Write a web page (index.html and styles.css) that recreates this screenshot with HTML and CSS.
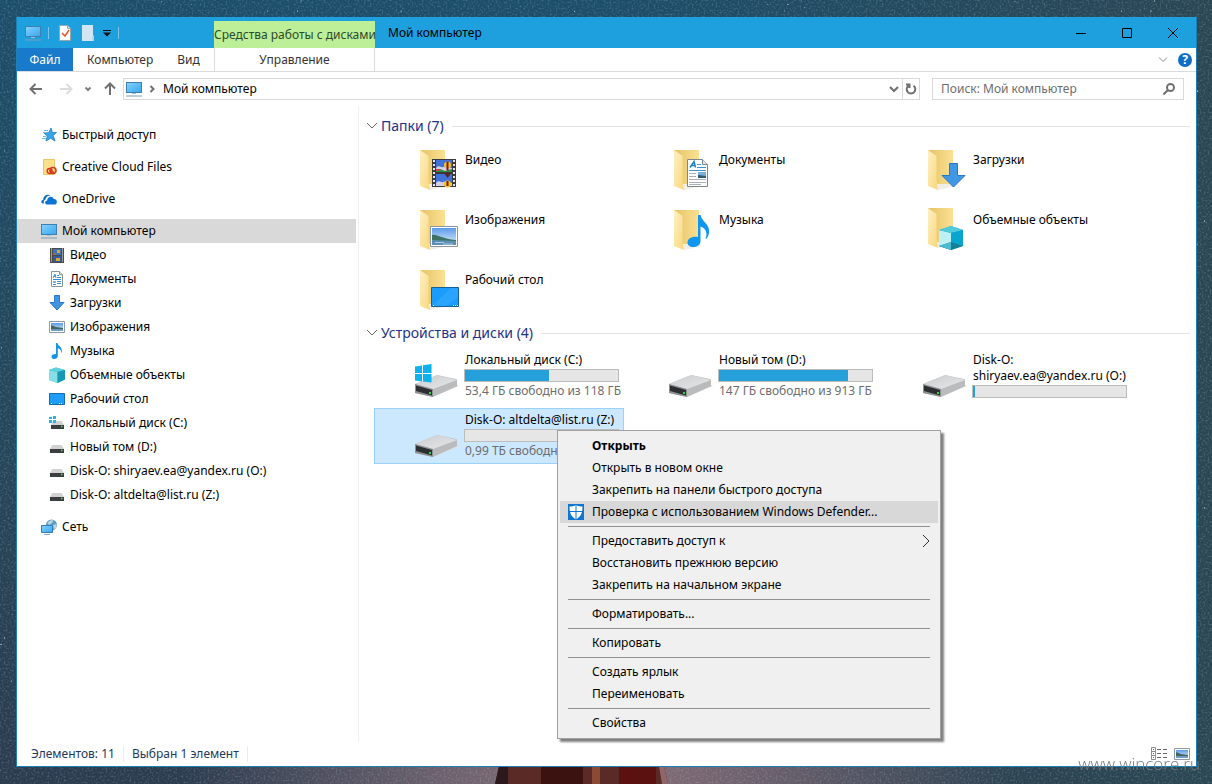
FILE: index.html
```html
<!DOCTYPE html>
<html lang="ru">
<head>
	<meta charset="utf-8">
	<title>Мой компьютер</title>
	<link rel="stylesheet" href="styles.css">
</head>

<body>
	<svg class="wallpaper" viewBox="0 0 1212 784" preserveAspectRatio="none" aria-hidden="true">
		<defs>
			<linearGradient id="sky" x1="0" y1="0" x2="0" y2="1">
				<stop offset="0" stop-color="#1c4d69"/>
				<stop offset=".5" stop-color="#24475b"/>
				<stop offset="1" stop-color="#2c3b4e"/>
			</linearGradient>
			<linearGradient id="skyRight" x1="0" y1="0" x2="1" y2="0">
				<stop offset=".5" stop-color="#2b4653" stop-opacity="0"/>
				<stop offset="1" stop-color="#2b4653"/>
			</linearGradient>
			<radialGradient id="dusk" cx="600" cy="800" r="420" gradientUnits="userSpaceOnUse">
				<stop offset="0" stop-color="#8c7078"/>
				<stop offset=".4" stop-color="#6b5f6b"/>
				<stop offset="1" stop-color="#6b5f6b" stop-opacity="0"/>
			</radialGradient>
			<filter id="grain" x="0" y="0" width="100%" height="100%">
				<feTurbulence type="fractalNoise" baseFrequency=".5" numOctaves="2" seed="4"/>
				<feColorMatrix values="0 0 0 0 .45  0 0 0 0 .7  0 0 0 0 .85  2.4 0 0 0 -1.1"/>
			</filter>
			<filter id="stars" x="0" y="0" width="100%" height="100%">
				<feTurbulence type="fractalNoise" baseFrequency=".3" numOctaves="1" seed="9"/>
				<feColorMatrix values="0 0 0 0 .8  0 0 0 0 .92  0 0 0 0 1  9 0 0 0 -6.8"/>
			</filter>
		</defs>
		<rect width="1212" height="784" fill="url(#sky)"/>
		<rect width="1212" height="784" fill="url(#skyRight)"/>
		<rect width="1212" height="784" fill="url(#dusk)"/>
		<rect width="1212" height="784" filter="url(#grain)" opacity=".25"/>
		<rect width="1212" height="740" filter="url(#stars)"/>
		<path d="M499 766h165l4 18H495z" fill="#5a2a27"/>
		<path d="M499 766h9v18h-13z" fill="#2c191d"/>
		<path d="M541 766h42v18h-42z" fill="#3c1210"/>
		<path d="M592 766h8v18h-8z" fill="#8a4a36"/>
		<path d="M619 766h37v18h-37z" fill="#5a110f"/>
		<path d="M659 766h5l4 18h-6z" fill="#8f6768"/>
	</svg>

	<svg class="defs" aria-hidden="true">
		<defs>
			<linearGradient id="gScreen" x1="0" y1="0" x2="1" y2="1">
				<stop offset="0" stop-color="#8bd3fb"/>
				<stop offset=".5" stop-color="#5dbcf7"/>
				<stop offset="1" stop-color="#3ba6ee"/>
			</linearGradient>
			<linearGradient id="gBack" x1="0" y1="0" x2="1" y2="0">
				<stop offset="0" stop-color="#e6c266"/>
				<stop offset="1" stop-color="#fbe193"/>
			</linearGradient>
			<linearGradient id="gFlap" x1="0" y1="0" x2="1" y2="1">
				<stop offset="0" stop-color="#fff0c4"/>
				<stop offset="1" stop-color="#f8d77a"/>
			</linearGradient>
			<linearGradient id="gDrive" x1="0" y1="0" x2="1" y2="1">
				<stop offset="0" stop-color="#c9cbcd"/>
				<stop offset="1" stop-color="#e8e9ea"/>
			</linearGradient>
			<linearGradient id="gSky" x1="0" y1="0" x2="0" y2="1">
				<stop offset="0" stop-color="#5b9be8"/>
				<stop offset="1" stop-color="#e4f1fb"/>
			</linearGradient>
		</defs>

		<symbol id="pc" viewBox="0 0 16 16">
			<rect x=".5" y="1.5" width="15" height="10" fill="url(#gScreen)" stroke="#3f7fae"/>
			<path d="M6 12.5h4" stroke="#9cc3dc"/>
			<path d="M0 15h16" stroke="#7d9db3"/>
		</symbol>
		<symbol id="star" viewBox="0 0 16 16">
			<path d="M10 1l1.300 4.500h4.200l-3.300 3 1.800 5.500-4.500-2.800L5 14l1.300-5L3 6l4.700-.3z" fill="#37a5ee" stroke="#1c7fc4" stroke-width=".8"/>
			<path d="M3 3.500h4M2 5.500h2M2 9.500h3M1 11.500h4" stroke="#6fbdec"/>
		</symbol>
		<symbol id="ccloud" viewBox="0 0 16 16">
			<path d="M2.500.5h11v15h-11z" fill="#fbe08c" stroke="#e8c768"/>
			<g fill="none" stroke="#d8391f" stroke-width="1.500">
				<circle cx="8.600" cy="12" r="2.400"/>
				<circle cx="12" cy="11.500" r="3"/>
				<path d="M8.500 11.500l4.500 2"/>
			</g>
		</symbol>
		<symbol id="onedrive" viewBox="0 0 16 16">
			<path d="M1.800 12.500C-.5 12 0 8.700 2.300 8.700 2 5 6.500 2.200 9.700 4.600 6.500 4.500 4.500 6.300 4.500 8.500c-2 .8-2.300 2.800-1.200 4z" fill="#0f6cbd"/>
			<path d="M6 13.500c-2.800-.4-2.300-4 .2-4.100C6.300 5.500 11.500 4.500 12.800 8c3.500-.3 4.200 4.700 1.200 5.500z" fill="#0a74d1"/>
		</symbol>
		<symbol id="video" viewBox="0 0 16 16">
			<path d="M1 1h14v15H1z" fill="#4a4a4a"/>
			<path d="M4 2h8v6H4z" fill="#4271b5"/>
			<path d="M4 9h8v6H4z" fill="#35599c"/>
			<path d="M8 3h3v3H8zM7 11h4v3H7z" fill="#d9a827"/>
			<path d="M4 6h3v2H4z" fill="#87754f"/>
			<path d="M2.500 1.500v14M13.500 1.500v14" stroke="#eee" stroke-dasharray="1 1"/>
		</symbol>
		<symbol id="doc" viewBox="0 0 16 16">
			<path d="M2.500.5h8l3 3v12h-11z" fill="#fff" stroke="#8a949c"/>
			<path d="M10.500.5v3h3" fill="#eee" stroke="#8a949c"/>
			<path d="M4 7l2-4 1 4M4.500 5.500h2M8 4.500h2M8 6.500h4M4 8.500h8M8 10.500h4M8 12.500h4M4 13.500h3" fill="none" stroke="#3a8fd0"/>
			<path d="M4 10h3v2H4z" fill="#8eabc1"/>
		</symbol>
		<symbol id="down" viewBox="0 0 16 16">
			<path d="M5.500.5h5v7h4.500L8 15 1 7.500h4.500z" fill="#3f95e4" stroke="#2a78c8"/>
		</symbol>
		<symbol id="pic" viewBox="0 0 16 16">
			<path d="M.5 2.500h15v11H.5z" fill="#fff" stroke="#8e9aa5"/>
			<path d="M2 4h12v8H2z" fill="url(#gSky)"/>
			<path d="M2 6l5 2 7 1v1H2z" fill="#40675f"/>
			<path d="M2 10h12v2H2z" fill="#6e9bbf"/>
		</symbol>
		<symbol id="music" viewBox="0 0 16 16">
			<path d="M7 0h1.500c.3 3 5 4 4.300 8.500-.3 1.300-.8 1.500-.8 1.500.5-3-1.500-4.200-3.200-4.700V13c0 1.700-1.800 3-3.700 3S2.500 15 2.500 13.500 4 11 7 11z" fill="#1593e6"/>
		</symbol>
		<symbol id="cube" viewBox="0 0 16 16">
			<path d="M0 3l7-2.500L16 3v9.500L8.500 16 0 13z" fill="#34bcd0"/>
			<path d="M0 3l8.500 2V16L0 13z" fill="#86dfe6"/>
			<path d="M0 3l7-2.500L16 3 8.500 5z" fill="#5fd0dc"/>
			<path d="M8.500 5L16 3v9.500L8.500 16z" fill="#1799b4"/>
		</symbol>
		<symbol id="desktop" viewBox="0 0 16 16">
			<path d="M.5 2.500h15v11H.5z" fill="#1f9dfb" stroke="#146cae"/>
			<path d="M2 12.500h1M10 12.500h4" stroke="#fff" stroke-dasharray="1 1"/>
		</symbol>
		<symbol id="hdd" viewBox="0 0 16 16">
			<path d="M3.500 6h9l2.500 4H1z" fill="#cfd1d3"/>
			<path d="M1 10h14v4H1z" fill="#3b3e3f"/>
			<path d="M12 11.500h1.500" stroke="#46e05a" stroke-width="1.500"/>
		</symbol>
		<symbol id="hddwin" viewBox="0 0 16 16">
			<path d="M4 6h8.500l2.500 4H2z" fill="#cfd1d3"/>
			<path d="M2 10h13v4H2z" fill="#3b3e3f"/>
			<path d="M12 11.500h1.500" stroke="#46e05a" stroke-width="1.500"/>
			<path d="M0 2h3v2H0zM4 1h3v3H4zM0 5h3v3H0zM4 5h3v3H4z" fill="#28b3ec"/>
		</symbol>
		<symbol id="net" viewBox="0 0 16 16">
			<circle cx="10.500" cy="6" r="5.500" fill="#5d9cc4"/>
			<path d="M6.500 4c2-3 4-3 6-2.500L11 4 8 6zM12 6l3.500-1c.5 3-1 5-2.500 5.500z" fill="#b6d7e6"/>
			<path d="M.5 6.500h11v7H.5z" fill="url(#gScreen)" stroke="#2f7db5"/>
			<path d="M3 15.500h6" stroke="#7bb2d4"/>
		</symbol>

		<symbol id="folder" viewBox="0 0 48 50">
			<path d="M15 36h17l3 2-18 4z" fill="#f1eee6"/>
			<path d="M7 2h25v34H12z" fill="url(#gBack)"/>
			<path d="M7 2l8.500 6v25L17 42 7 38z" fill="url(#gFlap)"/>
		</symbol>
		<symbol id="drive" viewBox="0 0 48 50">
			<path d="M22 48l24-10-2-1-24 10z" fill="#ddd"/>
			<path d="M2 36l21-8.500q1-.5 2-.3L43 31q1 .5 1 1v6l-24 11L2 45z" fill="#b9bbbd"/>
			<path d="M2 36l21-8.500q1-.5 2-.3L44 32 20 41z" fill="url(#gDrive)"/>
			<path d="M2 36l18 5v8L2 45z" fill="#8e9193"/>
			<path d="M3 37.500l16 4.500v5.500L3 43z" fill="#2b2f30"/>
			<path d="M16 44h2v2h-2z" fill="#35d04e"/>
		</symbol>
	</svg>

	<div class="window">
		<header class="titlebar">
			<div class="quick">
				<svg class="ico" aria-hidden="true"><use href="#pc"/></svg>
				<span class="divider"></span>
				<button type="button" aria-label="Свойства">
					<svg class="ico" viewBox="0 0 16 16"><path d="M2.500.5h8l3 3v12h-11z" fill="#fff" stroke="#9aa5ac"/><path d="M10.500.5v3h3" fill="#ddd" stroke="#9aa5ac"/><path d="M5 8l3 3 4-6" fill="none" stroke="#e0572c" stroke-width="1.500"/></svg>
				</button>
				<button type="button" aria-label="Новая папка">
					<svg class="ico" viewBox="0 0 16 16"><path d="M2 0h11v10l1 1v5H2z" fill="#d3e4f2"/><path d="M12 11h2v5h-2z" fill="#b9d3e8"/></svg>
				</button>
				<button type="button" aria-label="Настройка панели">
					<svg class="ico-caret" viewBox="0 0 8 8"><path d="M0 1.500h8" stroke="#111"/><path d="M0 3.500h8L4 7.500z" fill="#111"/></svg>
				</button>
				<span class="divider"></span>
			</div>
			<div class="context-tab">Средства работы с дисками</div>
			<h1 class="title">Мой компьютер</h1>
			<div class="controls">
				<button type="button" aria-label="Свернуть"><svg viewBox="0 0 10 10"><path d="M0 5.500h10"/></svg></button>
				<button type="button" aria-label="Развернуть"><svg viewBox="0 0 10 10"><path d="M.5.5h9v9h-9z"/></svg></button>
				<button type="button" aria-label="Закрыть"><svg viewBox="0 0 10 10"><path d="M0 0l10 10M10 0L0 10"/></svg></button>
			</div>
		</header>

		<nav class="ribbon">
			<div class="tabs">
				<button type="button" class="tab tab-file">Файл</button>
				<button type="button" class="tab">Компьютер</button>
				<button type="button" class="tab">Вид</button>
			</div>
			<button type="button" class="tab tab-manage">Управление</button>
			<div class="ribbon-right">
				<button type="button" aria-label="Развернуть ленту"><svg width="10" height="6" viewBox="0 0 10 6"><path d="M1 .5l4 4 4-4" fill="none" stroke="#8a8a8a"/></svg></button>
				<button type="button" class="help" aria-label="Справка">?</button>
			</div>
		</nav>

		<div class="address-row">
			<div class="nav-buttons">
				<button type="button" aria-label="Назад"><svg viewBox="0 0 14 14"><path d="M13 7H2M6.500 2L1.500 7l5 5" stroke="#707070"/></svg></button>
				<button type="button" aria-label="Вперед"><svg viewBox="0 0 14 14"><path d="M1 7h11M7.500 2l5 5-5 5" stroke="#dcdcdc"/></svg></button>
				<button type="button" class="nav-recent" aria-label="Последние"><svg viewBox="0 0 14 14"><path d="M4.500 5.500L7 8l2.500-2.500" stroke="#808080"/></svg></button>
				<button type="button" aria-label="Вверх"><svg viewBox="0 0 14 14"><path d="M7 13V2M2 6.500l5-5 5 5" stroke="#707070"/></svg></button>
			</div>
			<div class="address">
				<svg class="ico" aria-hidden="true"><use href="#pc"/></svg>
				<svg class="crumb" viewBox="0 0 6 8" aria-hidden="true"><path d="M1.500 1l3 3-3 3"/></svg>
				<span class="path">Мой компьютер</span>
				<button type="button" class="drop" aria-label="Предыдущие расположения"><svg width="10" height="7" viewBox="0 0 10 7"><path d="M1 1l4 4 4-4"/></svg></button>
				<button type="button" class="refresh" aria-label="Обновить"><svg width="12" height="12" viewBox="0 0 12 12"><path d="M8.500 2.700A4.300 4.300 0 1 1 3.500 2.700M1 1.500h3.500V5"/></svg></button>
			</div>
			<div class="search">
				<input type="text" placeholder="Поиск: Мой компьютер" aria-label="Поиск">
				<svg width="12" height="12" viewBox="0 0 12 12" aria-hidden="true"><circle cx="7.500" cy="4.500" r="3.500"/><path d="M5 7l-4.500 4.500"/></svg>
			</div>
		</div>

		<div class="content">
			<nav class="sidebar">
				<a href="#" class="side-item"><svg class="ico"><use href="#star"/></svg>Быстрый доступ</a>
				<a href="#" class="side-item"><svg class="ico"><use href="#ccloud"/></svg>Creative Cloud Files</a>
				<a href="#" class="side-item"><svg class="ico"><use href="#onedrive"/></svg>OneDrive</a>
				<div class="side-group">
					<a href="#" class="side-item active"><svg class="ico"><use href="#pc"/></svg>Мой компьютер</a>
					<a href="#" class="side-item sub"><svg class="ico"><use href="#video"/></svg>Видео</a>
					<a href="#" class="side-item sub"><svg class="ico"><use href="#doc"/></svg>Документы</a>
					<a href="#" class="side-item sub"><svg class="ico"><use href="#down"/></svg>Загрузки</a>
					<a href="#" class="side-item sub"><svg class="ico"><use href="#pic"/></svg>Изображения</a>
					<a href="#" class="side-item sub"><svg class="ico"><use href="#music"/></svg>Музыка</a>
					<a href="#" class="side-item sub"><svg class="ico"><use href="#cube"/></svg>Объемные объекты</a>
					<a href="#" class="side-item sub"><svg class="ico"><use href="#desktop"/></svg>Рабочий стол</a>
					<a href="#" class="side-item sub"><svg class="ico"><use href="#hddwin"/></svg>Локальный диск (C:)</a>
					<a href="#" class="side-item sub"><svg class="ico"><use href="#hdd"/></svg>Новый том (D:)</a>
					<a href="#" class="side-item sub"><svg class="ico"><use href="#hdd"/></svg>Disk-O: shiryaev.ea@yandex.ru (O:)</a>
					<a href="#" class="side-item sub"><svg class="ico"><use href="#hdd"/></svg>Disk-O: altdelta@list.ru (Z:)</a>
				</div>
				<a href="#" class="side-item"><svg class="ico"><use href="#net"/></svg>Сеть</a>
			</nav>

			<main class="files">
				<h2 class="group-title"><svg viewBox="0 0 12 8" aria-hidden="true"><path d="M1 1l5 5 5-5"/></svg>Папки (7)</h2>
				<ul class="tiles">
					<li class="tile">
						<a href="#" class="tile-link">
							<svg class="tile-icon" viewBox="0 0 48 50"><use href="#folder"/>
								<path d="M19 11h24v28H19z" fill="#3a3a3a"/>
								<path d="M23 12h16v12H23zM23 26h16v12H23z" fill="#3f72d8"/>
								<path d="M23 20c3-4 5 0 7-1s5 1 9 1v4H23zM23 35c3-4 5 0 7-1s5 1 9 1v3H23z" fill="#d8cfe6"/>
								<path d="M23 22l4-1 5 2 7-2v3H23z" fill="#2e8b3a"/>
								<path d="M23 21h4v2h-4z" fill="#d83c4a"/>
								<circle cx="34.500" cy="17" r="3.500" fill="#f3c31c"/><path d="M33.500 13.500h2v9h-2z" fill="#7a1a1a"/>
								<circle cx="34.500" cy="36" r="3.500" fill="#f3c31c"/><path d="M33.500 33h2v5h-2z" fill="#7a1a1a"/>
								<path d="M31 25l3.500 5 4-5z" fill="#5a2424"/>
								<path d="M21 12v27M41 12v27" stroke="#e8e8e8" stroke-width="2" stroke-dasharray="2 2"/>
							</svg>
							<span class="tile-text"><span class="name">Видео</span></span>
						</a>
					</li>
					<li class="tile">
						<a href="#" class="tile-link">
							<svg class="tile-icon" viewBox="0 0 48 50"><use href="#folder"/>
								<path d="M20.500 11.500h15l5 5v22h-20z" fill="#fff" stroke="#7d868c"/>
								<path d="M35.500 11.500v5h5" fill="#e4e4e4" stroke="#7d868c"/>
								<path d="M23 19.500l4-6 1.500 6M24.500 17.500h4" fill="none" stroke="#1f7fc9" stroke-width="1.500"/>
								<path d="M30 16.500h4M30 19.500h9M22 22.500h17" stroke="#3f95d4"/>
								<path d="M22 25.500h7M22 28.500h7M22 31.500h17M22 34.500h17M22 36.500h12" stroke="#aab0b5"/>
								<path d="M31 24h8v6h-8z" fill="#78aee0"/><path d="M31 27l8 1v2h-8z" fill="#345b6f"/>
							</svg>
							<span class="tile-text"><span class="name">Документы</span></span>
						</a>
					</li>
					<li class="tile">
						<a href="#" class="tile-link">
							<svg class="tile-icon" viewBox="0 0 48 50"><use href="#folder"/>
								<path d="M28.500 15.500h8v12h7.500L32.500 39 21 27.500h7.500z" fill="#3f97e6" stroke="#2878c4"/>
							</svg>
							<span class="tile-text"><span class="name">Загрузки</span></span>
						</a>
					</li>
					<li class="tile">
						<a href="#" class="tile-link">
							<svg class="tile-icon" viewBox="0 0 48 50"><use href="#folder"/>
								<path d="M17.500 18.500h27v20h-27z" fill="#fff" stroke="#8c969e"/>
								<path d="M19 20h24v17H19z" fill="url(#gSky)"/>
								<path d="M19 27c6-1 9 4 24 5v2H19z" fill="#3f7265"/>
								<path d="M19 32l24 1v4H19z" fill="#5f8fb3"/>
								<path d="M22 34.500h9M30 36h10" stroke="#a9cbe0"/>
							</svg>
							<span class="tile-text"><span class="name">Изображения</span></span>
						</a>
					</li>
					<li class="tile">
						<a href="#" class="tile-link">
							<svg class="tile-icon" viewBox="0 0 48 50"><use href="#folder"/>
								<path d="M31 7h2.500c.5 6 10 9 8.500 18-.8 4-2.500 6-3.500 6 2.500-6 0-11-5-12.500V33c0 3.500-3 6-7 6s-6-2-6-4.500c0-4 4.500-6.500 10.500-5.500z" fill="#0f96f0"/>
							</svg>
							<span class="tile-text"><span class="name">Музыка</span></span>
						</a>
					</li>
					<li class="tile">
						<a href="#" class="tile-link">
							<svg class="tile-icon" viewBox="0 0 48 50"><use href="#folder" y="-2"/>
								<path d="M18 22l12-4 12 4v16l-12 4-12-4z" fill="#1ba4c0"/>
								<path d="M18 22l12 3v12l-12 1z" fill="#bdf1f5"/>
								<path d="M18 22l12-4 12 4-12 3z" fill="#4fcbdc"/>
								<path d="M30 25l12-3v16l-12-4z" fill="#08a5cf"/>
								<path d="M18 38l12-4 12 4-12 4z" fill="#167f98"/>
								<path d="M18 38l12-4v8z" fill="#4bbccf"/>
							</svg>
							<span class="tile-text"><span class="name">Объемные объекты</span></span>
						</a>
					</li>
					<li class="tile">
						<a href="#" class="tile-link">
							<svg class="tile-icon" viewBox="0 0 48 50"><use href="#folder"/>
								<path d="M18.500 19.500h27v19h-27z" fill="#1a9cff" stroke="#155f96"/>
								<path d="M19 38L38 20h7v9l-12 9z" fill="#2ba4ff"/>
								<path d="M20 37.500h1M40 37.500h5" stroke="#fff" stroke-dasharray="1 1"/>
							</svg>
							<span class="tile-text"><span class="name">Рабочий стол</span></span>
						</a>
					</li>
				</ul>

				<h2 class="group-title"><svg viewBox="0 0 12 8" aria-hidden="true"><path d="M1 1l5 5 5-5"/></svg>Устройства и диски (4)</h2>
				<ul class="tiles drives">
					<li class="tile">
						<a href="#" class="tile-link">
							<svg class="tile-icon" viewBox="0 0 48 50"><use href="#drive"/>
								<path d="M2 18.500l7-1V25H2zM10 17.300l8.500-1.300v9H10zM2 26h7v7.500l-7-1zM10 26h8.500v8.500l-8.500-1z" fill="#0bb2ee"/>
							</svg>
							<span class="tile-text">
								<span class="name">Локальный диск (C:)</span>
								<span class="bar"><span class="fill" style="width: 55%"></span></span>
								<span class="free">53,4 ГБ свободно из 118 ГБ</span>
							</span>
						</a>
					</li>
					<li class="tile">
						<a href="#" class="tile-link">
							<svg class="tile-icon" viewBox="0 0 48 50"><use href="#drive"/></svg>
							<span class="tile-text">
								<span class="name">Новый том (D:)</span>
								<span class="bar"><span class="fill" style="width: 84%"></span></span>
								<span class="free">147 ГБ свободно из 913 ГБ</span>
							</span>
						</a>
					</li>
					<li class="tile">
						<a href="#" class="tile-link">
							<svg class="tile-icon" viewBox="0 0 48 50"><use href="#drive"/></svg>
							<span class="tile-text">
								<span class="name">Disk-O:<br>shiryaev.ea@yandex.ru (O:)</span>
								<span class="bar"><span class="fill" style="width: 1%"></span></span>
							</span>
						</a>
					</li>
					<li class="tile selected">
						<a href="#" class="tile-link">
							<svg class="tile-icon" viewBox="0 0 48 50"><use href="#drive"/></svg>
							<span class="tile-text">
								<span class="name">Disk-O: altdelta@list.ru (Z:)</span>
								<span class="bar"></span>
								<span class="free">0,99 ТБ свободно</span>
							</span>
						</a>

						<div class="menu" role="menu">
							<button type="button" role="menuitem" class="default">Открыть</button>
							<button type="button" role="menuitem">Открыть в новом окне</button>
							<button type="button" role="menuitem">Закрепить на панели быстрого доступа</button>
							<button type="button" role="menuitem" class="hover">
								<svg class="ico menu-icon" viewBox="0 0 16 16"><path d="M0 0h16v16H0z" fill="#0f76d0"/><path d="M8 1c2 1 4 1.500 6.500 1.500C14.500 9 13 12.500 8 15.500 3 12.500 1.500 9 1.500 2.500 4 2.500 6 2 8 1z" fill="#fff"/><path d="M8 1v15M1 7.500h14" stroke="#0f76d0"/></svg>
								Проверка с использованием Windows Defender...
							</button>
							<hr>
							<button type="button" role="menuitem">Предоставить доступ к
								<svg class="arrow" width="8" height="14" viewBox="0 0 8 14"><path d="M1 1l6 6-6 6"/></svg>
							</button>
							<button type="button" role="menuitem">Восстановить прежнюю версию</button>
							<button type="button" role="menuitem">Закрепить на начальном экране</button>
							<hr>
							<button type="button" role="menuitem">Форматировать...</button>
							<hr>
							<button type="button" role="menuitem">Копировать</button>
							<hr>
							<button type="button" role="menuitem">Создать ярлык</button>
							<button type="button" role="menuitem">Переименовать</button>
							<hr>
							<button type="button" role="menuitem">Свойства</button>
						</div>
					</li>
				</ul>
			</main>
		</div>

		<footer class="status">
			<span class="status-text">Элементов: 11</span>
			<span class="status-text">Выбран 1 элемент</span>
			<div class="views">
				<button type="button" aria-label="Таблица">
					<svg class="ico" viewBox="0 0 16 16"><path d="M.5 1.500h4v4h-4zM.5 5.500h4v4h-4zM.5 9.500h4v4h-4z" fill="#fff" stroke="#8a8a8a"/><path d="M2 3.500h1M2 7.500h1M2 11.500h1M6 3.500h4M12 3.500h4M6 7.500h4M12 7.500h4M6 11.500h4M12 11.500h4" stroke="#666"/></svg>
				</button>
				<button type="button" aria-label="Эскизы"><svg class="ico"><use href="#pic"/></svg></button>
			</div>
		</footer>
	</div>
	<div class="watermark">www.wincore.ru</div>
</body>

</html>
```
FILE: styles.css
```css
*{
	box-sizing: border-box;
}
body{
	margin: 0;
	padding: 17px 15px 17px 16px;
	min-height: 100vh;
	display: flex;
	flex-direction: column;
	background-color: #24475b;
	font-family: "Noto Sans", "Open Sans", sans-serif;
	font-size: 12px;
	line-height: 16px;
	color: #000;
}
.wallpaper{
	position: fixed;
	top: 0;
	left: 0;
	width: 100%;
	height: 100%;
}
.defs{
	position: absolute;
	width: 0;
	height: 0;
}
button, input{
	font: inherit;
	color: inherit;
	background: none;
	border: 0;
	padding: 0;
	margin: 0;
}
button{
	display: flex;
	align-items: center;
	justify-content: center;
}
a{
	color: inherit;
	text-decoration: none;
}
svg{
	flex: none;
}
.ico{
	width: 16px;
	height: 16px;
	display: block;
}

.window{
	position: relative;
	flex: 1;
	display: flex;
	flex-direction: column;
	background-color: #fff;
	border: 1px solid #1d80b5;
	border-top: 0;
}

/* title bar */
.titlebar{
	display: flex;
	height: 31px;
	background-color: #1e9fde;
}
.quick{
	width: 197px;
	padding-left: 8px;
	display: flex;
	align-items: center;
	gap: 7px;
}
.divider{
	width: 1px;
	height: 12px;
	margin-right: 1px;
	background-color: #7fc3e8;
}
.ico-caret{
	width: 8px;
	height: 8px;
}
.context-tab{
	width: 161px;
	margin-top: 4px;
	background-color: #bdee98;
	color: #2c4a2c;
	text-align: center;
	line-height: 28px;
	white-space: nowrap;
}
.title{
	flex: 1;
	margin: 0;
	padding-left: 13px;
	font-size: 12px;
	font-weight: normal;
	line-height: 32px;
}
.controls{
	display: flex;
}
.controls button{
	width: 46px;
}
.controls svg{
	width: 10px;
	height: 10px;
	fill: none;
	stroke: #000;
}

/* ribbon */
.ribbon{
	display: flex;
	height: 24px;
	border-bottom: 1px solid #dadbdc;
}
.tabs{
	width: 197px;
	display: flex;
}
.tab{
	padding: 0 12px;
	color: #333;
}
.tab-file{
	width: 56px;
	margin-right: 2px;
	background-color: #1979ca;
	color: #fff;
}
.tab-manage{
	width: 161px;
	border-left: 1px solid #dadbdc;
	border-right: 1px solid #dadbdc;
}
.ribbon-right{
	margin-left: auto;
	padding-right: 4px;
	display: flex;
	align-items: center;
	gap: 10px;
}
.help{
	width: 14px;
	height: 14px;
	border-radius: 50%;
	background-color: #0f6fc6;
	color: #fff;
	font-size: 12px;
	font-weight: bold;
}

/* address row */
.address-row{
	display: flex;
	align-items: center;
	height: 34px;
	padding: 0 12px;
}
.nav-buttons{
	display: flex;
	gap: 16px;
	width: 94px;
}
.nav-buttons svg{
	width: 14px;
	height: 14px;
	fill: none;
	stroke-width: 2;
}
.nav-buttons .nav-recent{
	margin: 0 -8px;
}
.address{
	flex: 1;
	height: 22px;
	border: 1px solid #d9d9d9;
	display: flex;
	align-items: center;
}
.address svg:not(.ico){
	fill: none;
	stroke: #707070;
	stroke-width: 2;
}
.address .ico{
	margin-left: 2px;
}
.crumb{
	width: 6px;
	height: 8px;
	margin: 0 8px 0 7px;
}
.path{
	flex: 1;
}
.drop{
	width: 16px;
	height: 20px;
}
.refresh{
	width: 17px;
	height: 20px;
	border-left: 1px solid #d9d9d9;
}
.search{
	width: 252px;
	height: 22px;
	margin-left: 12px;
	padding: 0 8px;
	border: 1px solid #d9d9d9;
	display: flex;
	align-items: center;
}
.search input{
	flex: 1;
	min-width: 0;
	outline: none;
}
.search input::placeholder{
	color: #6d6d6d;
	opacity: 1;
}
.search svg{
	fill: none;
	stroke: #707070;
	stroke-width: 2;
}

/* content */
.content{
	flex: 1;
	display: flex;
}
.sidebar{
	width: 342px;
	padding: 17px 2px 0 0;
	border-right: 1px solid #f0f0f0;
	display: flex;
	flex-direction: column;
	gap: 8px;
}
.side-item{
	height: 24px;
	padding-left: 24px;
	display: flex;
	align-items: center;
	gap: 5px;
}
.side-item.sub{
	padding-left: 32px;
}
.side-item.active{
	background-color: #d9d9d9;
}
.files{
	flex: 1;
	padding: 8px 6px 0 7px;
}
.group-title{
	margin: 0;
	height: 24px;
	display: flex;
	align-items: center;
	font-size: 14px;
	font-weight: normal;
	color: #1e3287;
}
.group-title svg{
	width: 12px;
	height: 8px;
	margin-right: 3px;
	fill: none;
	stroke: #666;
}
.group-title::after{
	content: "";
	flex: 1;
	height: 1px;
	margin-left: 8px;
	background-color: #e2e2e2;
}
.tiles{
	list-style: none;
	margin: 0 0 -3px;
	padding: 10px 0 0 8px;
	display: grid;
	grid-template-columns: repeat(auto-fill, 250px);
	gap: 4px;
}
.tiles.drives{
	padding-top: 3px;
}
.tile{
	position: relative;
	height: 56px;
}
.tile-link{
	height: 56px;
	padding-left: 39px;
	display: flex;
}
.tile.selected .tile-link{
	background-color: #cce8ff;
	box-shadow: inset 0 0 0 1px #99d1ff;
}
.tile-icon{
	width: 48px;
	height: 50px;
}
.tile-text{
	padding: 4px 0 0 3px;
	white-space: nowrap;
}
.name, .bar, .free{
	display: block;
}
.name, .free{
	padding-left: 1px;
}
.free{
	color: #6d6d6d;
}
.bar{
	width: 155px;
	height: 13px;
	margin: 1px 0;
	border: 1px solid #bcbcbc;
	background-color: #e6e6e6;
}
.fill{
	display: block;
	height: 100%;
	background-color: #26a0da;
}

/* context menu */
.menu{
	position: absolute;
	left: 183px;
	top: 22px;
	z-index: 2;
	width: 384px;
	padding: 4px 2px;
	background-color: #f0f0f0;
	border: 1px solid #a0a0a0;
	box-shadow: 3px 3px 2px rgba(0, 0, 0, .5);
}
.menu button{
	position: relative;
	width: 100%;
	height: 22px;
	padding: 0 8px 0 32px;
	justify-content: flex-start;
}
.menu .default{
	font-weight: bold;
}
.menu .hover{
	background-color: #d8d8d8;
}
.menu-icon{
	position: absolute;
	left: 8px;
	top: 3px;
}
.menu .arrow{
	margin-left: auto;
	fill: none;
	stroke: #333;
}
.menu hr{
	height: 1px;
	margin: 3px 8px;
	border: 0;
	background-color: #919191;
}

/* status bar */
.status{
	height: 24px;
	padding: 0 6px 0 6px;
	display: flex;
	align-items: center;
	color: #1e395b;
}
.status-text{
	padding: 0 8px;
	border-right: 1px solid #ececec;
}
.views{
	margin-left: auto;
	display: flex;
	gap: 7px;
}
.watermark{
	position: absolute;
	right: 12px;
	bottom: 8px;
	font-family: "Open Sans", sans-serif;
	font-size: 17px;
	font-weight: 300;
	line-height: 24px;
	color: #74797c;
}
```
